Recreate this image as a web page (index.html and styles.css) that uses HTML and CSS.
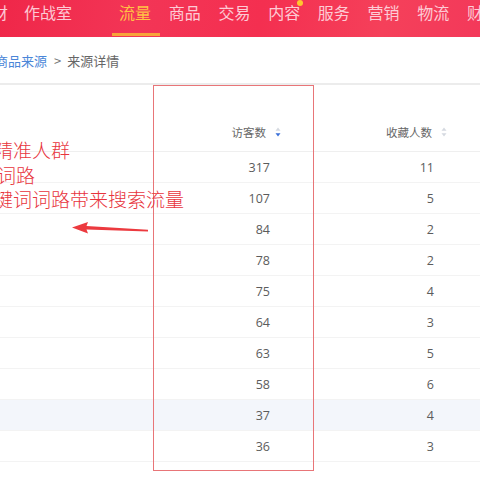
FILE: index.html
```html
<!DOCTYPE html>
<html lang="zh-CN">
<head>
<meta charset="utf-8">
<title>来源详情</title>
<link rel="stylesheet" href="styles.css">
</head>
<body>
<div class="page">
  <nav class="topnav">
    <span class="nav-item cut">财</span>
    <span class="nav-item wide">作战室</span>
    <span class="sep"></span>
    <span class="nav-item active">流量</span>
    <span class="nav-item">商品</span>
    <span class="nav-item">交易</span>
    <span class="nav-item dot">内容</span>
    <span class="nav-item">服务</span>
    <span class="nav-item">营销</span>
    <span class="nav-item">物流</span>
    <span class="nav-item">财务</span>
  </nav>
  <div class="crumbs">
    <a class="crumb-link">商品来源</a><span class="crumb-sep">&gt;</span><span class="crumb-cur">来源详情</span>
  </div>
  <div class="table">
    <div class="thead">
      <div class="th c1">访客数
        <svg class="sort" width="6" height="10" viewBox="0 0 6 10"><path d="M3 0.5 L5.5 3.8 L0.5 3.8 Z" fill="#d5d9e0"/><path d="M3 9.5 L5.5 6.2 L0.5 6.2 Z" fill="#3a6fd8"/></svg>
      </div>
      <div class="th c2">收藏人数
        <svg class="sort" width="6" height="10" viewBox="0 0 6 10"><path d="M3 0.5 L5.5 3.8 L0.5 3.8 Z" fill="#d5d9e0"/><path d="M3 9.5 L5.5 6.2 L0.5 6.2 Z" fill="#d5d9e0"/></svg>
      </div>
    </div>
    <div class="row"><div class="td c1">317</div><div class="td c2">11</div></div>
    <div class="row"><div class="td c1">107</div><div class="td c2">5</div></div>
    <div class="row"><div class="td c1">84</div><div class="td c2">2</div></div>
    <div class="row"><div class="td c1">78</div><div class="td c2">2</div></div>
    <div class="row"><div class="td c1">75</div><div class="td c2">4</div></div>
    <div class="row"><div class="td c1">64</div><div class="td c2">3</div></div>
    <div class="row"><div class="td c1">63</div><div class="td c2">5</div></div>
    <div class="row"><div class="td c1">58</div><div class="td c2">6</div></div>
    <div class="row hl"><div class="td c1">37</div><div class="td c2">4</div></div>
    <div class="row"><div class="td c1">36</div><div class="td c2">3</div></div>
  </div>

  <div class="frame"></div>
  <div class="note">
    <div class="l1">精准人群</div>
    <div class="l2">词路</div>
    <div class="l3">键词词路带来搜索流量</div>
  </div>
  <svg class="arrow" width="480" height="480" viewBox="0 0 480 480">
    <polygon points="72,227.5 88,222 86.5,226 148,229.8 148,231.6 86.5,229.6 88,233.5" fill="#ec3a3f"/>
  </svg>
</div>
</body>
</html>
```
FILE: styles.css
```css
html, body {
  margin: 0;
  padding: 0;
  background: #ffffff;
}
.page {
  position: relative;
  width: 480px;
  height: 480px;
  overflow: hidden;
  font-family: "Noto Sans CJK SC", "Liberation Sans", sans-serif;
}
.topnav {
  height: 37px;
  display: flex;
  align-items: flex-start;
  background: linear-gradient(100deg, #ef2648 0%, #f33556 30%, #f42f50 55%, #f5405a 80%, #f3395a 100%);
  margin-left: -8px;
  box-sizing: border-box;
}
.nav-item {
  position: relative;
  font-size: 16px;
  line-height: 16px;
  padding-top: 4px;
  height: 37px;
  box-sizing: border-box;
  color: rgba(255, 225, 232, 0.88);
  margin-right: 17.7px;
  white-space: nowrap;
}
.nav-item.cut {
  margin-right: 16px;
}
.nav-item.wide {
  margin-right: 25px;
}
.sep {
  width: 1px;
  height: 24px;
  margin-top: 3px;
  background: rgba(255, 255, 255, 0.18);
  margin-right: 22px;
}
.nav-item.active {
  color: #ffc244;
}
.nav-item.active::after {
  content: "";
  position: absolute;
  left: -7px;
  right: -9px;
  bottom: 1px;
  height: 3px;
  background: #f7a43a;
}
.nav-item.dot::after {
  content: "";
  position: absolute;
  right: -3px;
  top: 0px;
  width: 6px;
  height: 6px;
  border-radius: 50%;
  background: #ffc62e;
}
.crumbs {
  height: 48px;
  display: flex;
  align-items: center;
  font-size: 13px;
  margin-left: -5px;
  border-bottom: 2px solid #ececec;
  box-sizing: border-box;
}
.crumb-link {
  color: #4a86d8;
}
.crumb-sep {
  color: #777;
  margin: 0 6px 0 7px;
}
.crumb-cur {
  color: #666;
}
.table {
  display: flex;
  flex-direction: column;
}
.thead {
  height: 67px;
  display: flex;
  align-items: flex-end;
  border-bottom: 1px solid #efefef;
  box-sizing: border-box;
  padding-bottom: 11px;
}
.th {
  display: flex;
  align-items: center;
  justify-content: flex-end;
  font-size: 11.5px;
  color: #666;
  gap: 9px;
}
.th.c1 { width: 281px; }
.th.c2 { width: 166px; }
.row {
  height: 31px;
  display: flex;
  align-items: center;
  border-bottom: 1px solid #f3f3f3;
  box-sizing: border-box;
}
.row.hl {
  background: #f3f6fb;
}
.td {
  font-family: "Open Sans", "Liberation Sans", sans-serif;
  font-size: 12.5px;
  color: #5c5c5c;
  text-align: right;
  box-sizing: border-box;
  padding-right: 11px;
}
.td.c1 { width: 281px; }
.td.c2 { width: 164px; }
.frame {
  position: absolute;
  left: 153px;
  top: 85px;
  width: 161px;
  height: 386px;
  border: 1.5px solid #e87578;
  box-sizing: border-box;
}
.note {
  position: absolute;
  left: 0;
  top: 138px;
  font-size: 19px;
  line-height: 24.5px;
  color: #e8343d;
  font-weight: 300;
  white-space: nowrap;
}
.l1 { margin-left: -6px; }
.l2 { margin-left: -3px; }
.l3 { margin-left: -6px; }
.arrow {
  position: absolute;
  left: 0;
  top: 0;
  pointer-events: none;
}
```
